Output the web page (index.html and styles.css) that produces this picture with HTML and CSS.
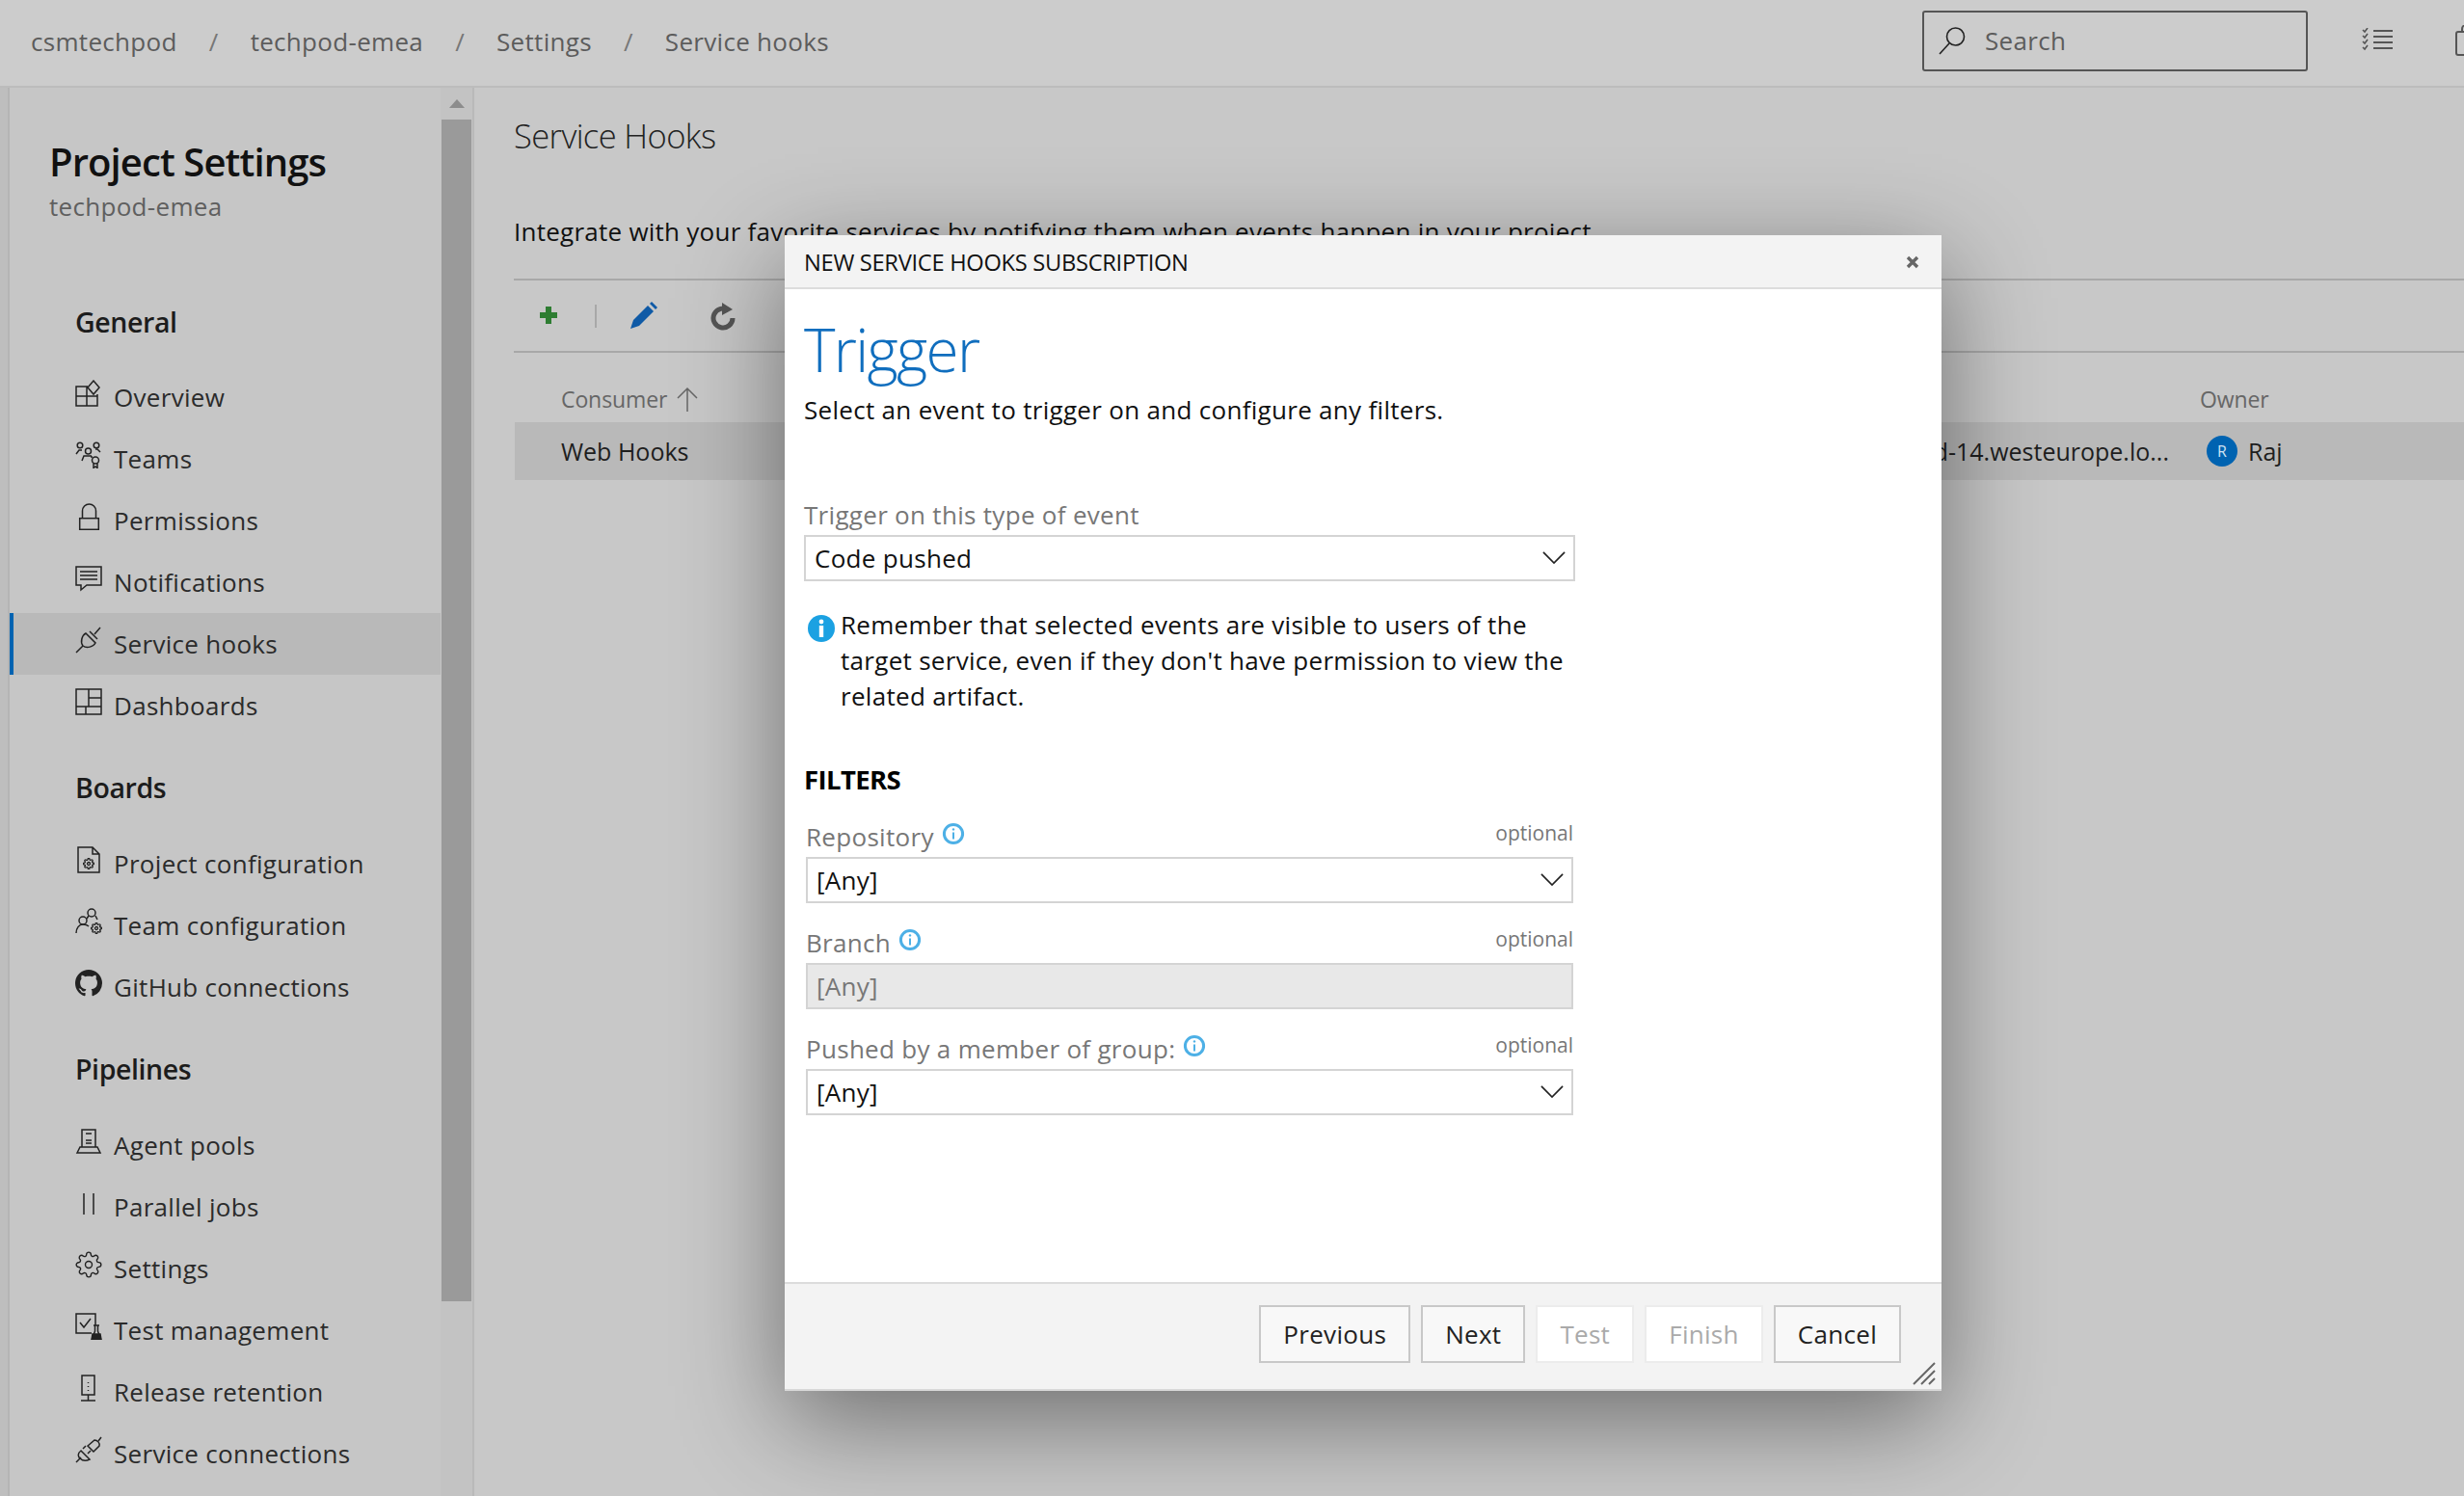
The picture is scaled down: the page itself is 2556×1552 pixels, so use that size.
FILE: index.html

```html
<!DOCTYPE html>
<html lang="en">
<head>
  <meta charset="UTF-8">
  <title>Service Hooks - Project Settings</title>
  <link rel="stylesheet" href="styles.css">
</head>
<body>
  <svg class="sprite" aria-hidden="true">
    <symbol id="chevron" viewBox="0 0 26 14"><path d="M1 1l12 12L25 1" fill="none" stroke="currentColor" stroke-width="1.8"/></symbol>
    <symbol id="hint" viewBox="0 0 24 24"><circle cx="12" cy="12" r="9.6" fill="none" stroke="currentColor" stroke-width="3"/><path d="M12 10.5v7" stroke="currentColor" stroke-width="2"/><circle cx="12" cy="7.4" r="1.2" fill="currentColor"/></symbol>
    <symbol id="gear" viewBox="0 0 24 24"><circle cx="12" cy="12" r="3" fill="none"/><path fill="none" d="M19.4 15a1.65 1.65 0 0 0 .33 1.82l.06.06a2 2 0 0 1 0 2.83 2 2 0 0 1-2.83 0l-.06-.06a1.65 1.65 0 0 0-1.82-.33 1.65 1.65 0 0 0-1 1.51V21a2 2 0 0 1-2 2 2 2 0 0 1-2-2v-.09A1.65 1.65 0 0 0 9 19.4a1.65 1.65 0 0 0-1.82.33l-.06.06a2 2 0 0 1-2.83 0 2 2 0 0 1 0-2.83l.06-.06a1.65 1.65 0 0 0 .33-1.82 1.65 1.65 0 0 0-1.51-1H3a2 2 0 0 1-2-2 2 2 0 0 1 2-2h.09A1.65 1.65 0 0 0 4.6 9a1.65 1.65 0 0 0-.33-1.82l-.06-.06a2 2 0 0 1 0-2.83 2 2 0 0 1 2.83 0l.06.06a1.65 1.65 0 0 0 1.82.33H9a1.65 1.65 0 0 0 1-1.51V3a2 2 0 0 1 2-2 2 2 0 0 1 2 2v.09a1.65 1.65 0 0 0 1 1.51 1.65 1.65 0 0 0 1.82-.33l.06-.06a2 2 0 0 1 2.83 0 2 2 0 0 1 0 2.83l-.06.06a1.65 1.65 0 0 0-.33 1.82V9a1.65 1.65 0 0 0 1.51 1H21a2 2 0 0 1 2 2 2 2 0 0 1-2 2h-.09a1.65 1.65 0 0 0-1.51 1z"/></symbol>
  </svg>

  <header class="topbar">
    <nav class="crumbs">
      <span>csmtechpod</span><i>/</i><span>techpod-emea</span><i>/</i><span>Settings</span><i>/</i><span>Service hooks</span>
    </nav>
    <div class="search">
      <svg width="30" height="30" viewBox="0 0 30 30" fill="none" stroke="#222" stroke-width="1.6"><circle cx="18.5" cy="11" r="9"/><path d="M12 18L2 29"/></svg>
      <span>Search</span>
    </div>
    <svg class="top-icon" width="32" height="26" viewBox="0 0 32 26" fill="none" stroke="#555" stroke-width="2"><path d="M12 3h20M12 9h20M12 15h20M12 21h20"/><path d="M1 2l2 2 3-4M1 8l2 2 3-4M1 14l2 2 3-4M1 20l2 2 3-4" stroke-width="1.6"/></svg>
    <svg class="top-icon bag" width="20" height="32" viewBox="0 0 20 32" fill="none" stroke="#555" stroke-width="2"><rect x="1" y="7" width="24" height="24" rx="2"/><path d="M7 7V4a4 4 0 0 1 8 0v3"/></svg>
  </header>

  <div class="shell">
    <div class="strip"></div>
    <aside class="sidebar">
      <h1 class="project-title">Project Settings</h1>
      <div class="project-name">techpod-emea</div>

      <h3 class="nav-head first">General</h3>
      <a class="nav-item">
        <svg class="nav-icon" viewBox="0 0 28 28"><path d="M13 7H1v20h22V15M1 17h22M12 7v20M19 1l6 7-6 7-6-7z"/></svg>Overview</a>
      <a class="nav-item">
        <svg class="nav-icon" viewBox="0 0 28 28"><circle cx="5" cy="4" r="2.8"/><circle cx="22" cy="4" r="2.8"/><circle cx="13.5" cy="10" r="3"/><path d="M1 13l3-4h3M26 11l-3-3h-2M7 20l2-5h8M17 15v2"/><rect x="17.5" y="16" width="7" height="7" rx="3.5"/><path d="M19 23v4.5l2-1.5 2 1.5V23"/></svg>Teams</a>
      <a class="nav-item">
        <svg class="nav-icon" viewBox="0 0 28 28"><rect x="4.7" y="15.7" width="19.6" height="11.6"/><path d="M7.5 15.7V8a7 7 0 0 1 14 0v7.7"/></svg>Permissions</a>
      <a class="nav-item">
        <svg class="nav-icon" viewBox="0 0 28 28"><path d="M1 2h26v19H12l-6 5v-5H1zM5 7h18M5 11h18M5 15h18"/></svg>Notifications</a>
      <a class="nav-item active">
        <svg class="nav-icon" viewBox="0 0 28 28"><path d="M1 27l7-7M20 8l6-7M15 5l8 8"/><path d="M11 7l10 10c-2 4-9 6-13 3-3-4-1-11 3-13z"/></svg>Service hooks</a>
      <a class="nav-item">
        <svg class="nav-icon" viewBox="0 0 28 28"><rect x="1" y="1" width="26" height="26"/><path d="M14 1v18M14 10h13M1 19h26M11 19v8"/></svg>Dashboards</a>

      <h3 class="nav-head">Boards</h3>
      <a class="nav-item">
        <svg class="nav-icon" viewBox="0 0 28 28"><path d="M3 1h15l7 7v19H3zM18 1v7h7"/><use href="#gear" x="8" y="12" width="12" height="12" stroke-width="2.6"/></svg>Project configuration</a>
      <a class="nav-item">
        <svg class="nav-icon" viewBox="0 0 28 28"><circle cx="17" cy="5" r="4"/><circle cx="8" cy="13" r="4"/><path d="M1 26c0-5 3-9 7-9s5 1 6 2M12 11l2-3M21 8l2 4"/><use href="#gear" x="16" y="15" width="12" height="12" stroke-width="2.6"/></svg>Team configuration</a>
      <a class="nav-item">
        <svg class="nav-icon solid" viewBox="0 0 16 16"><path d="M8 0C3.58 0 0 3.58 0 8c0 3.54 2.29 6.53 5.47 7.59.4.07.55-.17.55-.38 0-.19-.01-.82-.01-1.49-2.01.37-2.53-.49-2.69-.94-.09-.23-.48-.94-.82-1.13-.28-.15-.68-.52-.01-.53.63-.01 1.08.58 1.23.82.72 1.21 1.87.87 2.33.66.07-.52.28-.87.51-1.07-1.78-.2-3.64-.89-3.64-3.95 0-.87.31-1.59.82-2.15-.08-.2-.36-1.02.08-2.12 0 0 .67-.21 2.2.82.64-.18 1.32-.27 2-.27s1.36.09 2 .27c1.53-1.04 2.2-.82 2.2-.82.44 1.1.16 1.92.08 2.12.51.56.82 1.27.82 2.15 0 3.07-1.87 3.75-3.65 3.95.29.25.54.73.54 1.48 0 1.07-.01 1.93-.01 2.2 0 .21.15.46.55.38A8.01 8.01 0 0 0 16 8c0-4.42-3.58-8-8-8z"/></svg>GitHub connections</a>

      <h3 class="nav-head">Pipelines</h3>
      <a class="nav-item">
        <svg class="nav-icon" viewBox="0 0 28 28"><path d="M7 20V2h14v18M2 26l3-6h18l3 6zM11 6h6M11 13h6M11 16h6"/></svg>Agent pools</a>
      <a class="nav-item">
        <svg class="nav-icon" viewBox="0 0 28 28"><path d="M9 4v22M19 4v22"/></svg>Parallel jobs</a>
      <a class="nav-item">
        <svg class="nav-icon" viewBox="0 0 28 28"><use href="#gear" width="28" height="28" stroke-width="1.2"/></svg>Settings</a>
      <a class="nav-item">
        <svg class="nav-icon" viewBox="0 0 28 28"><path d="M17 21H1V1h20v12M5 10l4 5 7-9"/><path d="M19 13h6M20.5 13v6l-3 8h9l-3-8v-6"/><path d="M18 22h8l1 6H17z" fill="#222"/></svg>Test management</a>
      <a class="nav-item">
        <svg class="nav-icon" viewBox="0 0 28 28"><path d="M7 1h13v20H7zM13.5 21v6M6 27h15M13.5 8v1M13.5 12v1M13.5 16v1"/></svg>Release retention</a>
      <a class="nav-item">
        <svg class="nav-icon" viewBox="0 0 28 28"><path d="M1 27l5-5M24 5l3-4M6 15l9 9c-4 2-8 1-10-1s-3-5 1-8zM8 13l3-3M13 18l3-3"/><path d="M13 10l7-6c3 0 6 3 5 6l-6 6z"/></svg>Service connections</a>
    </aside>
    <div class="scroll">
      <div class="scroll-up"></div>
      <div class="scroll-thumb"></div>
    </div>

    <main class="content">
      <h2 class="page-title">Service Hooks</h2>
      <p class="page-text">Integrate with your favorite services by notifying them when events happen in your project.</p>
      <div class="toolbar">
        <svg width="20" height="20" viewBox="0 0 20 20" class="tb-add"><path d="M10 1v18M1 10h18" stroke="#2e7d32" stroke-width="6"/></svg>
        <span class="tb-sep"></span>
        <svg width="28" height="28" viewBox="0 0 28 28" class="tb-edit"><path d="M0 28l3-9L18 4l6 6L9 25z" fill="#0f5aa6"/><path d="M20 2l2-2 6 6-2 2z" fill="#0f5aa6"/></svg>
        <svg width="28" height="30" viewBox="0 0 28 30" class="tb-refresh" fill="none"><path d="M20 9a10 10 0 1 0 4 8" stroke="#555" stroke-width="5"/><path d="M13 1l11 7-11 6z" fill="#555"/></svg>
      </div>
      <div class="grid-row grid-head">
        <span class="sort">Consumer <svg width="22" height="26" viewBox="0 0 22 26" fill="none" stroke="#666" stroke-width="1.5"><path d="M11 26V2M1 12L11 2l10 10"/></svg></span>
        <span></span>
        <span>Owner</span>
      </div>
      <div class="grid-row grid-data">
        <span>Web Hooks</span>
        <span class="url">https://techpod-build-14.westeurope.lo...</span>
        <span class="owner"><b class="avatar">R</b>Raj</span>
      </div>
    </main>
  </div>

  <section class="dialog">
    <header class="dialog-head">
      <span>NEW SERVICE HOOKS SUBSCRIPTION</span>
      <svg width="14" height="14" viewBox="0 0 14 14"><path d="M2 2l10 10M12 2L2 12" stroke="#666" stroke-width="3.4"/></svg>
    </header>
    <div class="dialog-body">
      <h2 class="step-title">Trigger</h2>
      <p class="step-text">Select an event to trigger on and configure any filters.</p>

      <div class="event-label">Trigger on this type of event</div>
      <div class="select event-select">Code pushed<svg width="24" height="13"><use href="#chevron"/></svg></div>

      <div class="notice">
        <svg width="28" height="28" viewBox="0 0 28 28"><circle cx="14" cy="14" r="14" fill="#1ba1e2"/><circle cx="14" cy="7" r="2.4" fill="#fff"/><path d="M14 11v12" stroke="#fff" stroke-width="4.4"/></svg>
        <p>Remember that selected events are visible to users of the target service, even if they don't have permission to view the related artifact.</p>
      </div>

      <h3 class="filters-title">FILTERS</h3>
      <div class="filters">
        <div class="field">
          <div class="field-head"><span>Repository</span><svg width="24" height="24"><use href="#hint"/></svg><em>optional</em></div>
          <div class="select">[Any]<svg width="24" height="13"><use href="#chevron"/></svg></div>
        </div>
        <div class="field">
          <div class="field-head"><span>Branch</span><svg width="24" height="24"><use href="#hint"/></svg><em>optional</em></div>
          <div class="select disabled">[Any]</div>
        </div>
        <div class="field">
          <div class="field-head"><span>Pushed by a member of group:</span><svg width="24" height="24"><use href="#hint"/></svg><em>optional</em></div>
          <div class="select">[Any]<svg width="24" height="13"><use href="#chevron"/></svg></div>
        </div>
      </div>
    </div>
    <footer class="dialog-foot">
      <button class="btn">Previous</button>
      <button class="btn">Next</button>
      <button class="btn off">Test</button>
      <button class="btn off">Finish</button>
      <button class="btn">Cancel</button>
      <svg class="grip" width="24" height="24" viewBox="0 0 24 24"><path d="M1 23L23 1M9 23L23 9M17 23l6-6" stroke="#666" stroke-width="2"/></svg>
    </footer>
  </section>
</body>
</html>
```

FILE: styles.css

```css
* {
  box-sizing: border-box;
}
body {
  margin: 0;
  height: 1552px;
  overflow: hidden;
  position: relative;
  background: #c8c8c8;
  color: #222;
  font-family: "Open Sans", "Noto Sans", sans-serif;
  font-size: 26px;
  letter-spacing: 0.3px;
}
h1, h2, h3, p {
  margin: 0;
  font-weight: 400;
}
.sprite {
  display: none;
}

/* top bar */
.topbar {
  height: 91px;
  display: flex;
  align-items: center;
  background: #cccccc;
  border-bottom: 2px solid #bcbcbc;
  padding-left: 32px;
  overflow: hidden;
}
.crumbs {
  display: flex;
  margin-top: -3px;
  color: #5c5c5c;
  line-height: 34px;
  flex: 1;
}
.crumbs i {
  font-style: normal;
  color: #777;
  width: 76px;
  text-align: center;
}
.search {
  width: 400px;
  height: 63px;
  margin-top: -5px;
  border: 2px solid #555;
  border-radius: 3px;
  display: flex;
  align-items: center;
  gap: 19px;
  padding-left: 14px;
  color: #5c5c5c;
}
.top-icon {
  margin-left: 56px;
  margin-top: -5px;
  flex: none;
}
.bag {
  margin-left: 65px;
  margin-right: -11px;
}

/* layout */
.shell {
  display: flex;
  height: 1461px;
}
.strip {
  width: 10px;
  background: #bebebe;
  border-right: 2px solid #b4b4b4;
}
.sidebar {
  width: 447px;
  padding-top: 50px;
  background: #c6c6c6;
}
.project-title {
  padding-left: 41px;
  font-size: 40px;
  line-height: 54px;
  font-weight: 600;
  color: #111;
  letter-spacing: -0.9px;
}
.project-name {
  padding-left: 41px;
  line-height: 38px;
  color: #5f5f5f;
}
.nav-head {
  margin: 33px 0 27px;
  padding-left: 68px;
  font-size: 28.5px;
  line-height: 40px;
  font-weight: 600;
  color: #1c1c1c;
  letter-spacing: -0.4px;
}
.nav-head.first {
  margin-top: 81px;
  margin-bottom: 26px;
}
.nav-item {
  display: flex;
  align-items: center;
  height: 64px;
  padding-left: 64px;
  border-left: 4px solid transparent;
  color: #2b2b2b;
}
.nav-item.active {
  background: #b9b9b9;
  border-left-color: #0063b1;
}
.nav-icon {
  width: 28px;
  height: 28px;
  margin: -8px 12px 0 0;
  flex: none;
  fill: none;
  stroke: #222;
  stroke-width: 1.5;
}
.nav-icon.solid {
  fill: #222;
  stroke: none;
}
.scroll {
  width: 35px;
  background: #c3c3c3;
  border-right: 2px solid #b9b9b9;
  padding: 0 1px;
}
.scroll-up {
  height: 33px;
  display: flex;
  align-items: center;
  justify-content: center;
}
.scroll-up::before {
  content: "";
  border: 8px solid transparent;
  border-top: 0;
  border-bottom: 9px solid #8c8c8c;
}
.scroll-thumb {
  height: 1226px;
  background: #9a9a9a;
}

/* service hooks page */
.content {
  flex: 1;
  padding: 25px 0 0 41px;
}
.page-title {
  font-size: 34.5px;
  line-height: 50px;
  font-weight: 300;
  color: #222;
  letter-spacing: -0.6px;
}
.page-text {
  margin-top: 54px;
  line-height: 40px;
  color: #111;
  letter-spacing: 0.25px;
  white-space: nowrap;
}
.toolbar {
  margin-top: 29px;
  height: 77px;
  display: flex;
  align-items: center;
  border-top: 2px solid #a8a8a8;
  border-bottom: 2px solid #a8a8a8;
  padding-left: 26px;
}
.tb-add {
  margin-top: -2px;
}
.tb-sep {
  width: 2px;
  height: 24px;
  background: #a8a8a8;
  margin: 0 35px 0 38px;
}
.tb-edit {
  margin-top: -2px;
}
.tb-refresh {
  margin: 0 0 0 54px;
}
.grid-row {
  display: grid;
  grid-template-columns: 600px 1100px 1fr;
  padding-left: 49px;
  align-items: center;
}
.grid-head {
  height: 72px;
  padding-top: 23px;
  font-size: 23px;
  letter-spacing: -0.1px;
  color: #666;
}
.sort {
  display: flex;
  align-items: center;
  gap: 10px;
}
.grid-data {
  height: 60px;
  margin-left: 1px;
  padding-left: 48px;
  background: #b9b9b9;
  color: #1e1e1e;
  font-size: 25px;
  letter-spacing: 0;
}
.url {
  padding-right: 32px;
  text-align: right;
  white-space: nowrap;
}
.owner {
  display: flex;
  align-items: center;
  gap: 11px;
  padding-left: 7px;
}
.avatar {
  width: 32px;
  height: 32px;
  border-radius: 50%;
  background: #0063b1;
  color: #cfe3f4;
  font-size: 16px;
  font-weight: 400;
  display: flex;
  align-items: center;
  justify-content: center;
}

/* dialog */
.dialog {
  position: absolute;
  left: 814px;
  top: 244px;
  width: 1200px;
  height: 1199px;
  display: flex;
  flex-direction: column;
  background: #fff;
  color: #111;
  box-shadow: 0 30px 100px rgba(0, 0, 0, 0.45);
}
.dialog-head {
  height: 56px;
  flex: none;
  display: flex;
  align-items: center;
  justify-content: space-between;
  padding: 2px 23px 0 20px;
  background: #f3f3f3;
  border-bottom: 2px solid #dcdcdc;
  font-size: 23.7px;
  letter-spacing: -0.3px;
}
.dialog-body {
  flex: 1;
  padding: 24px 20px 0;
}
.step-title {
  font-size: 62px;
  line-height: 76px;
  font-weight: 300;
  color: #106ebe;
  letter-spacing: -1.7px;
}
.step-text {
  margin-top: 7px;
  line-height: 36px;
}
.event-label {
  margin-top: 74px;
  line-height: 34px;
  color: #777;
}
.select {
  display: flex;
  align-items: center;
  justify-content: space-between;
  height: 48px;
  padding: 0 8px 0 9px;
  border: 2px solid #d4d4d4;
  color: #111;
}
.select svg {
  color: #222;
  margin-top: -2px;
}
.event-select {
  width: 800px;
  margin-top: 4px;
}
.notice {
  display: flex;
  width: 795px;
  margin-top: 27px;
  line-height: 37px;
}
.notice svg {
  flex: none;
  margin: 8px 6px 0 4px;
}
.filters-title {
  margin-top: 51px;
  font-size: 27.5px;
  line-height: 34px;
  font-weight: 700;
  letter-spacing: -0.6px;
  color: #000;
}
.filters {
  width: 796px;
  margin: 25px 0 0 2px;
  display: flex;
  flex-direction: column;
  gap: 24px;
}
.field-head {
  height: 38px;
  display: flex;
  align-items: center;
  gap: 8px;
  padding-bottom: 4px;
  color: #777;
}
.field-head svg {
  color: #4db0e6;
  margin-top: -6px;
}
.field-head em {
  margin-left: auto;
  font-style: normal;
  font-size: 21px;
  letter-spacing: 0;
  margin-top: -8px;
}
.select.disabled {
  background: #e8e8e8;
  color: #777;
}
.dialog-foot {
  height: 113px;
  flex: none;
  position: relative;
  display: flex;
  justify-content: flex-end;
  gap: 11px;
  padding: 22px 42px 0 0;
  background: #f3f3f3;
  border-top: 2px solid #dcdcdc;
  border-bottom: 2px solid #d8d8d8;
}
.btn {
  height: 60px;
  padding: 0 23px;
  font: inherit;
  letter-spacing: inherit;
  background: #f8f8f8;
  border: 2px solid #c8c8c8;
  color: #222;
}
.btn.off {
  background: #fff;
  border-color: #ececec;
  color: #aaa;
}
.grip {
  position: absolute;
  right: 6px;
  bottom: 4px;
}
```
